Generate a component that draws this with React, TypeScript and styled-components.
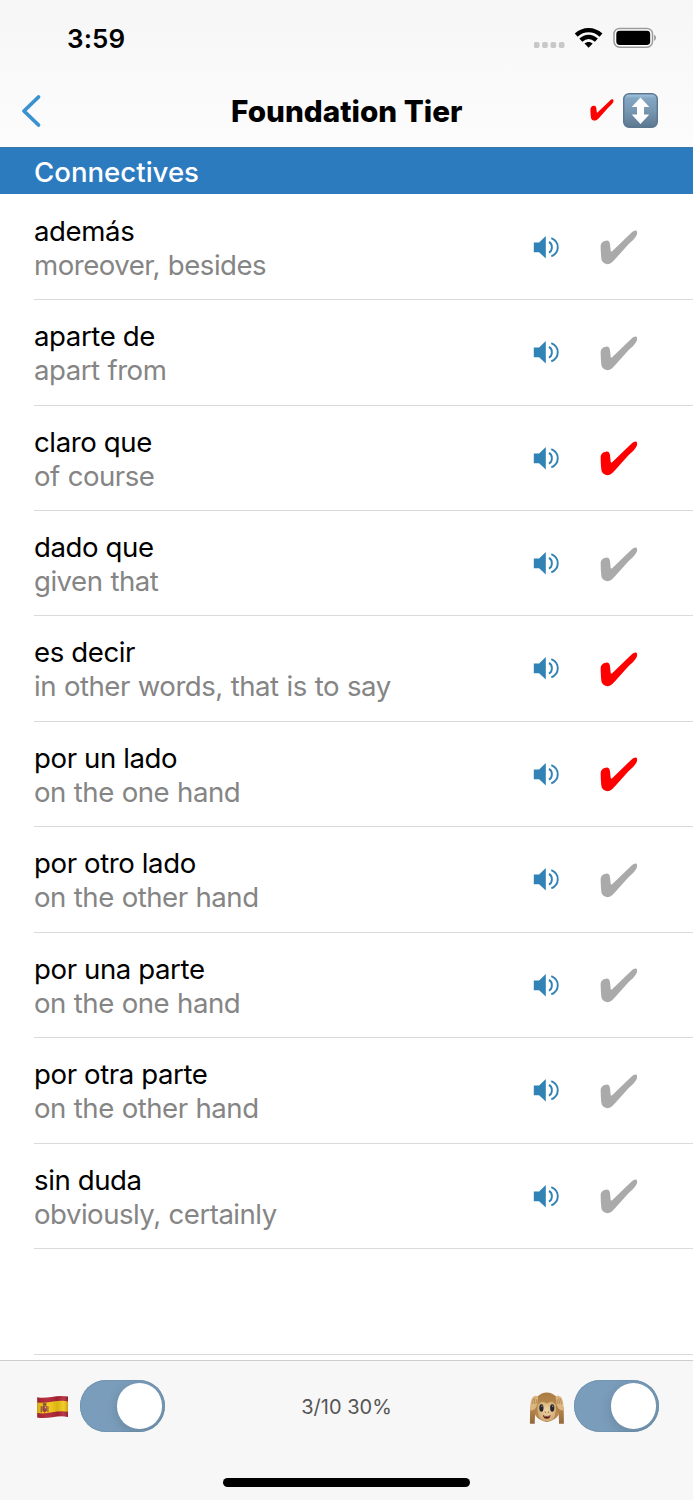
import React from "react";
import styled, { createGlobalStyle } from "styled-components";

const Global = createGlobalStyle`
  * { box-sizing: border-box; }
  body { margin: 0; background: #fff; font-family: Inter, "Liberation Sans", sans-serif; color: #000; }
  svg { display: block; flex: none; }
`;

const Screen = styled.div`
  width: 693px;
  height: 1500px;
  display: flex;
  flex-direction: column;
  overflow: hidden;
  background: #fff;
`;

const Top = styled.header`
  height: 147px;
  flex: none;
  background: linear-gradient(#f6f6f6, #f9f9f9 45%, #fcfcfc);
`;

const StatusBar = styled.div`
  height: 75px;
  padding: 0 37px 0 67px;
  display: flex;
  align-items: center;
  justify-content: space-between;
`;

const Clock = styled.span`
  font-size: 26px;
  line-height: 32px;
  font-weight: 600;
  letter-spacing: 0.1px;
  padding-top: 2px;
`;

const StatusIcons = styled.div`
  display: flex;
`;

const NavBar = styled.nav`
  height: 72px;
  padding: 0 35.5px 1px 21px;
  display: grid;
  grid-template-columns: 120px 1fr 105px;
  align-items: center;
`;

const Title = styled.h1`
  margin: 0;
  font-size: 29.7px;
  line-height: 34px;
  font-weight: 800;
  letter-spacing: 0;
  text-align: center;
  white-space: nowrap;
`;

const NavActions = styled.div`
  display: flex;
  align-items: center;
  justify-content: flex-end;
  gap: 9px;
`;

const SectionHeader = styled.h2`
  height: 47px;
  flex: none;
  margin: 0;
  padding: 2px 0 0 34px;
  background: #2d7bbf;
  border-top: 1px solid #3b79ad;
  color: #fff;
  font-size: 27.6px;
  line-height: 44px;
  font-weight: 500;
  letter-spacing: 0;
`;

const List = styled.ul`
  flex: 1;
  margin: 0;
  padding: 0.7px 0 0 34px;
  list-style: none;
  overflow: hidden;
`;

const Row = styled.li`
  height: 105.45px;
  padding: 0 55px 0 0;
  border-bottom: 1px solid #dadada;
  display: flex;
  align-items: center;
`;

const Words = styled.div`
  flex: 1;
  padding-top: 1.5px;
`;

const Term = styled.div`
  font-size: 27.6px;
  line-height: 34px;
  letter-spacing: -0.4px;
`;

const Meaning = styled(Term)`
  color: #858585;
  letter-spacing: -0.5px;
  word-spacing: 0.7px;
`;

const RowIcons = styled.div`
  display: flex;
  align-items: center;
  gap: 40px;
  padding-top: 1.6px;
`;

const Footer = styled.footer`
  height: 140px;
  flex: none;
  background: #f7f7f7;
  border-top: 1px solid #cbcfcf;
  display: flex;
  flex-direction: column;
  align-items: center;
`;

const Controls = styled.div`
  width: 100%;
  height: 90px;
  padding: 0 34px 0 36px;
  display: grid;
  grid-template-columns: 130px 1fr 132px;
  align-items: center;
`;

const Control = styled.div<{ $end?: boolean }>`
  display: flex;
  align-items: center;
  gap: ${(p) => (p.$end ? 9 : 11)}px;
  justify-content: ${(p) => (p.$end ? "flex-end" : "flex-start")};
`;

const Switch = styled.div`
  width: 85px;
  height: 52px;
  flex: none;
  border-radius: 26px;
  padding: 3.3px 3px;
  display: flex;
  justify-content: flex-end;
  background: #7a9dbb;
  box-shadow: inset 0 0 0 1px #7295b2;
  overflow: hidden;
`;

const Knob = styled.div`
  width: 45.4px;
  height: 45.4px;
  border-radius: 50%;
  background: #fff;
  box-shadow: 0 3px 12px rgba(0, 0, 0, 0.15);
`;

const Score = styled.div`
  font-size: 20px;
  line-height: 26px;
  padding-top: 1px;
  color: #555;
  text-align: center;
`;

const HomeIndicator = styled.div`
  width: 247px;
  height: 8.5px;
  margin-top: 27px;
  border-radius: 5px;
  background: #000;
`;

const Check = ({ color, width = 38 }: { color: string; width?: number }) => (
  <svg width={width} height={(width * 35) / 38} viewBox="0 0 114 105">
    <path
      fill={color}
      d="M2 50C2 38 9 33 18 32C26 31 29 36 30 43L32 62C33 66 35 65 38 62L94 8C102 1 110 -1 111 5C112 11 111 15 107 20C101 29 92 36 84 44L45 88C39 95 34 100 27 102C17 104 8 99 5 91C3 82 2 61 2 50Z"
    />
  </svg>
);

const Speaker = () => (
  <svg width="27.5" height="26" viewBox="0 0 27.5 26">
    <path fill="#3182b5" d="M.8 7.4h5.3L12.8 1V23.6L6.1 17.2H.8z" />
    <path
      fill="none"
      stroke="#3182b5"
      strokeWidth="1.9"
      d="M15.9 7C19.9 8.6 19.9 16 15.9 17.6M18.3 3.2C26.9 6.8 26.9 17.8 18.3 21.4"
    />
  </svg>
);

const Back = () => (
  <svg width="22" height="34" viewBox="0 0 22 34">
    <path d="M17.5 3L3 17L17.5 31" fill="none" stroke="#3b92d0" strokeWidth="3.8" strokeLinecap="round" strokeLinejoin="round" />
  </svg>
);

const SortButton = () => (
  <svg width="35" height="35" viewBox="0 0 35 35">
    <defs>
      <linearGradient id="sort" x1="0" y1="0" x2="0" y2="1">
        <stop offset="0" stopColor="#a8c9e2" />
        <stop offset=".14" stopColor="#83a6c3" />
        <stop offset=".5" stopColor="#7897b1" />
        <stop offset="1" stopColor="#5c7891" />
      </linearGradient>
    </defs>
    <rect x=".7" y=".7" width="33.6" height="33.6" rx="5.5" fill="url(#sort)" stroke="#5a7791" strokeWidth="1.4" />
    <path fill="#fff" d="M17.5 4.5L26.3 14H21V21.5H26.3L17.5 31L8.7 21.5H14V14H8.7Z" />
  </svg>
);

const Signal = () => (
  <svg width="122" height="24" viewBox="0 0 122 24">
    <g fill="#c8c8c8">
      <rect x="-.2" y="16" width="5.7" height="6" rx="1.8" />
      <rect x="8.1" y="16" width="5.7" height="6" rx="1.8" />
      <rect x="16.5" y="16" width="5.7" height="6" rx="1.8" />
      <rect x="24.8" y="16" width="5.7" height="6" rx="1.8" />
    </g>
    <g fill="none" stroke="#000" strokeWidth="4.3">
      <path d="M42.2 9.1C49.5 2.5 59.7 2.5 67 9.1" />
      <path d="M46.8 14.2C51.6 9.8 57.6 9.8 62.4 14.2" />
    </g>
    <path d="M50.5 17.6C52.6 15.4 56.6 15.4 58.7 17.6L54.6 21.8Z" />
    <rect x="80" y="2.4" width="38.5" height="18.8" rx="5.6" fill="#fff" stroke="#9b9b9b" strokeWidth="1.5" />
    <rect x="82.3" y="4.7" width="33.9" height="14.3" rx="3.4" />
    <path fill="#999" d="M120.1 8.8C122.6 9.7 122.6 14 120.1 14.9Z" />
  </svg>
);

const Flag = () => (
  <svg width="33" height="25" viewBox="0 0 33 25">
    <defs>
      <linearGradient id="fold" x1="0" x2="1" y1="0" y2="0">
        <stop offset="0" stopColor="#000" stopOpacity=".12" />
        <stop offset=".35" stopColor="#fff" stopOpacity=".05" />
        <stop offset=".65" stopColor="#000" stopOpacity=".1" />
        <stop offset=".85" stopColor="#fff" stopOpacity=".1" />
        <stop offset="1" stopColor="#000" stopOpacity=".2" />
      </linearGradient>
    </defs>
    <path fill="#b02436" d="M1.2 3.2C11 5.5 20 .3 32 2.6V22.9C21 20.2 12 26 1.2 23.4Z" />
    <path fill="#f2c714" d="M1.2 8.4C11 10.4 20 5.2 32 7.4V17.8C21 15.4 12 21 1.2 18.9Z" />
    <path fill="#9a6035" d="M4.6 12.2H6V18.2H4.6zM11.2 12.2H12.6V18.2H11.2z" />
    <path fill="#a4382c" d="M6.4 12H10.9V16.7L8.7 18.7L6.4 16.7Z" />
    <path fill="#84502e" d="M6.6 9.7L8.6 8.6L10.7 9.7L10.2 11.7H7.1Z" />
    <path fill="#d9a98b" d="M8.7 12.6H10.2V14.6H8.7z" />
    <path fill="#6b5060" d="M7.7 14.1H9.5V16H7.7z" />
    <path fill="url(#fold)" d="M1.2 3.2C11 5.5 20 .3 32 2.6V22.9C21 20.2 12 26 1.2 23.4Z" />
  </svg>
);

const Monkey = () => (
  <svg width="36" height="36" viewBox="0 -2 36 36">
    <defs>
      <linearGradient id="arm" x1="0" y1="0" x2="0" y2="1">
        <stop offset="0" stopColor="#b98a50" />
        <stop offset="1" stopColor="#94683c" />
      </linearGradient>
      <linearGradient id="fur" x1="0" y1="0" x2="0" y2="1">
        <stop offset="0" stopColor="#a97b42" />
        <stop offset=".5" stopColor="#b98a4f" />
        <stop offset="1" stopColor="#a67a45" />
      </linearGradient>
      <radialGradient id="face" cx=".5" cy=".45" r=".6">
        <stop offset="0" stopColor="#f0d7a8" />
        <stop offset="1" stopColor="#cfa36c" />
      </radialGradient>
    </defs>
    <ellipse cx="17.8" cy="15.8" rx="12.8" ry="13.4" fill="url(#fur)" />
    <path fill="url(#fur)" d="M5.2 16C3.8 26 9 30 17.8 32C26.6 30 31.8 26 30.4 16Z" />
    <path fill="url(#face)" d="M17.8 13.8C14 10 8.2 11.5 8.4 18.5C8.5 21.5 9.6 22.5 9.6 25C10 29.5 14 31.2 17.8 31.2C21.6 31.2 25.6 29.5 26 25C26 22.5 27.1 21.5 27.2 18.5C27.4 11.5 21.6 10 17.8 13.8Z" />
    <ellipse cx="12.4" cy="18" rx="2.1" ry="3.7" fill="#25262b" />
    <ellipse cx="23.2" cy="18" rx="2.1" ry="3.7" fill="#25262b" />
    <circle cx="12.9" cy="16.3" r=".7" fill="#999" />
    <circle cx="23.7" cy="16.3" r=".7" fill="#999" />
    <path d="M15.8 21.8L17 22.5M20 21.8L18.8 22.5" stroke="#82552f" strokeWidth="1" />
    <path fill="#5c1c14" d="M13.9 25.3Q17.8 26.1 21.7 25.3Q21 28.8 17.8 28.8Q14.6 28.8 13.9 25.3Z" />
    <path d="M15 25.9H20.6" stroke="#fff0d8" strokeWidth=".8" />
    <path fill="url(#arm)" d="M1.1 17L7 19.5C6 24 5.8 28 5.8 33.7H.9zM34.7 17L28.8 19.5C29.8 24 30 28 30 33.7H34.9z" />
    <path fill="#dcb67f" d="M1.2 20.5C1 12 2.6 6.2 6.3 5.8C8.6 5.4 9.6 7 8.8 9.8L8.2 14C7.8 17.5 5.8 20.5 1.2 20.5ZM34.6 20.5C34.8 12 33.2 6.2 29.5 5.8C27.2 5.4 26.2 7 27 9.8L27.6 14C28 17.5 30 20.5 34.6 20.5Z" />
    <path fill="none" stroke="#a87c4c" strokeWidth=".7" d="M3 14L4.5 8.5M5 14L6.1 7.8M6.9 14L7.7 9.3M32.8 14L31.3 8.5M30.8 14L29.7 7.8M28.9 14L28.1 9.3" />
  </svg>
);

const entries = [
  { term: "además", meaning: "moreover, besides", known: false },
  { term: "aparte de", meaning: "apart from", known: false },
  { term: "claro que", meaning: "of course", known: true },
  { term: "dado que", meaning: "given that", known: false },
  { term: "es decir", meaning: "in other words, that is to say", known: true },
  { term: "por un lado", meaning: "on the one hand", known: true },
  { term: "por otro lado", meaning: "on the other hand", known: false },
  { term: "por una parte", meaning: "on the one hand", known: false },
  { term: "por otra parte", meaning: "on the other hand", known: false },
  { term: "sin duda", meaning: "obviously, certainly", known: false },
];

export default function App() {
  return (
    <Screen>
      <Global />
      <Top>
        <StatusBar>
          <Clock>3:59</Clock>
          <StatusIcons><Signal /></StatusIcons>
        </StatusBar>
        <NavBar>
          <Back />
          <Title>Foundation Tier</Title>
          <NavActions>
            <Check color="#ff0000" width={24} />
            <SortButton />
          </NavActions>
        </NavBar>
      </Top>
      <SectionHeader>Connectives</SectionHeader>
      <List>
        {entries.map((e) => (
          <Row key={e.term}>
            <Words>
              <Term>{e.term}</Term>
              <Meaning>{e.meaning}</Meaning>
            </Words>
            <RowIcons>
              <Speaker />
              <Check color={e.known ? "#ff0000" : "#aaaaaa"} />
            </RowIcons>
          </Row>
        ))}
        <Row />
      </List>
      <Footer>
        <Controls>
          <Control>
            <Flag />
            <Switch><Knob /></Switch>
          </Control>
          <Score>3/10 30%</Score>
          <Control $end>
            <Monkey />
            <Switch><Knob /></Switch>
          </Control>
        </Controls>
        <HomeIndicator />
      </Footer>
    </Screen>
  );
}
